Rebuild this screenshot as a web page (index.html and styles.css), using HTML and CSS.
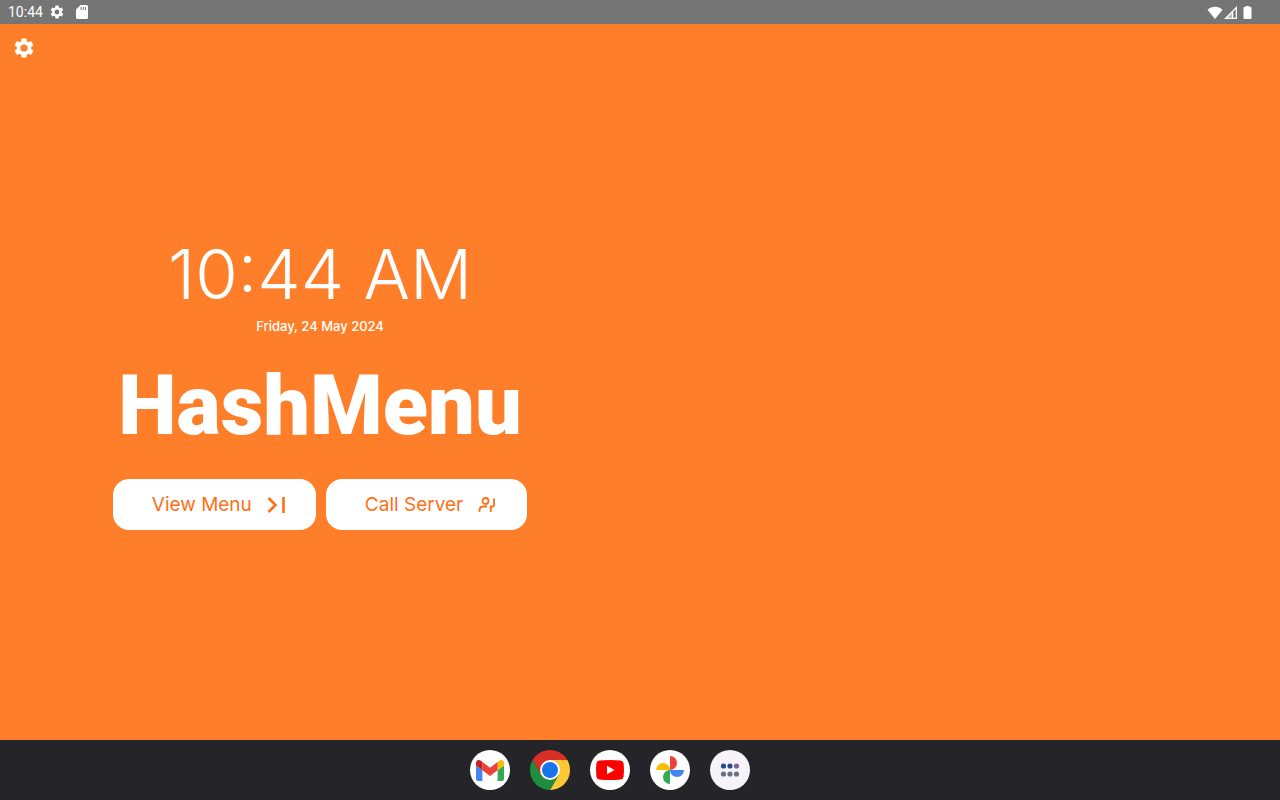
FILE: index.html
```html
<!DOCTYPE html>
<html lang="en">
<head>
    <meta charset="utf-8">
    <meta name="viewport" content="width=device-width, initial-scale=1">
    <title>HashMenu</title>
    <link rel="stylesheet" href="styles.css">
</head>
<body>
    <div class="status-bar">
        <div class="status-left">
            <span>10:44</span>
            <svg class="status-gear" viewBox="0 0 24 24" fill="currentColor"><path d="M19.14 12.94c.04-.3.06-.61.06-.94 0-.32-.02-.64-.07-.94l2.03-1.58a.49.49 0 0 0 .12-.61l-1.92-3.32a.49.49 0 0 0-.59-.22l-2.39.96c-.5-.38-1.03-.7-1.62-.94l-.36-2.54a.48.48 0 0 0-.48-.41h-3.84a.47.47 0 0 0-.47.41l-.36 2.54c-.59.24-1.13.57-1.62.94l-2.39-.96a.48.48 0 0 0-.59.22L2.74 8.87a.47.47 0 0 0 .12.61l2.03 1.58c-.05.3-.09.63-.09.94s.02.64.07.94l-2.03 1.58a.49.49 0 0 0-.12.61l1.92 3.32c.12.22.37.29.59.22l2.39-.96c.5.38 1.03.7 1.62.94l.36 2.54c.05.24.24.41.48.41h3.84c.24 0 .44-.17.47-.41l.36-2.54c.59-.24 1.13-.56 1.62-.94l2.39.96c.22.08.47 0 .59-.22l1.92-3.32a.47.47 0 0 0-.12-.61zM12 15.6A3.6 3.6 0 1 1 12 8.400a3.600 3.600 0 0 1 0 7.200z"/></svg>
            <svg class="status-card" viewBox="0 0 12 14"><path fill="#fff" d="M4.500 0H10.500A1.500 1.500 0 0 1 12 1.500V12.500A1.500 1.500 0 0 1 10.500 14H1.500A1.500 1.500 0 0 1 0 12.500V4.500z"/><path fill="#757575" d="M4.500 2h1v3h-1zM6.800 2h1v3h-1zM9 2h1v3H9z"/></svg>
        </div>
        <div class="status-right">
            <svg width="16" height="13" viewBox="0 0 16 13"><path fill="#fff" d="M8 13 .5 3.700C4.500-.2 11.500-.2 15.500 3.700z"/></svg>
            <svg width="13" height="13" viewBox="0 0 13 13"><path fill="#fff" fill-rule="evenodd" d="M13 0v13H0zM8 7.200 3.500 11.800H8zM9.300 5.500v6.300h2.400V3.200z"/><path fill="#fff" opacity=".5" d="M8 7.200 3.500 11.800H8z"/></svg>
            <svg class="battery" width="9" height="13" viewBox="0 0 9 13"><path fill="#fff" d="M2.500 1V0h4v1H7.500a1 1 0 0 1 1 1v10a1 1 0 0 1-1 1h-6a1 1 0 0 1-1-1V2a1 1 0 0 1 1-1z"/></svg>
        </div>
    </div>

    <main class="home">
        <button class="settings" type="button" aria-label="Settings">
            <svg width="24" height="24" viewBox="0 0 24 24" fill="currentColor"><path d="M19.14 12.94c.04-.3.06-.61.06-.94 0-.32-.02-.64-.07-.94l2.03-1.58a.49.49 0 0 0 .12-.61l-1.92-3.32a.49.49 0 0 0-.59-.22l-2.39.96c-.5-.38-1.03-.7-1.62-.94l-.36-2.54a.48.48 0 0 0-.48-.41h-3.84a.47.47 0 0 0-.47.41l-.36 2.54c-.59.24-1.13.57-1.62.94l-2.39-.96a.48.48 0 0 0-.59.22L2.74 8.87a.47.47 0 0 0 .12.61l2.03 1.58c-.05.3-.09.63-.09.94s.02.64.07.94l-2.03 1.58a.49.49 0 0 0-.12.61l1.92 3.32c.12.22.37.29.59.22l2.39-.96c.5.38 1.03.7 1.62.94l.36 2.54c.05.24.24.41.48.41h3.84c.24 0 .44-.17.47-.41l.36-2.54c.59-.24 1.13-.56 1.62-.94l2.39.96c.22.08.47 0 .59-.22l1.92-3.32a.47.47 0 0 0-.12-.61zM12 15.6A3.6 3.6 0 1 1 12 8.400a3.600 3.600 0 0 1 0 7.200z"/></svg>
        </button>
        <div class="welcome">
            <div class="clock">10:44 AM</div>
            <div class="date">Friday, 24 May 2024</div>
            <h1 class="title">HashMenu</h1>
            <div class="actions">
                <button class="action" type="button">
                    View Menu
                    <svg width="18" height="18" viewBox="0 0 18 18" fill="none" stroke="currentColor" stroke-width="2.600"><path d="M1.500 2 8.500 9l-7 7M16.500 1v16"/></svg>
                </button>
                <button class="action" type="button">
                    Call Server
                    <svg width="18" height="18" viewBox="0 0 18 18" fill="none" stroke="currentColor" stroke-width="1.800"><circle cx="7.500" cy="5" r="3"/><path d="M1.500 16v-1.500c0-2.500 1.500-4 4-4H9M16 2.500v6.300c0 1-.5 1.700-1.500 1.700h-1.800V16"/></svg>
                </button>
            </div>
        </div>
    </main>

    <nav class="dock">
        <a href="#" class="app" aria-label="Gmail">
            <svg width="28" height="21" viewBox="52 42 88 66"><path fill="#4285f4" d="M58 108h14V74L52 59v43c0 3.320 2.690 6 6 6"/><path fill="#34a853" d="M120 108h14c3.320 0 6-2.690 6-6V59l-20 15"/><path fill="#fbbc04" d="M120 48v26l20-15v-8c0-7.420-8.470-11.650-14.400-7.200"/><path fill="#ea4335" d="M72 74V48l24 18 24-18v26L96 92"/><path fill="#c5221f" d="M52 51v8l20 15V48l-5.600-4.200c-5.940-4.450-14.400-.22-14.400 7.200"/></svg>
        </a>
        <a href="#" class="app chrome" aria-label="Chrome">
            <svg width="40" height="40" viewBox="0 0 40 40"><path fill="#fcc934" d="M20 10H37.320A20 20 0 0 1 20 40L28.660 25z"/><path fill="#1e8e3e" d="M20 40A20 20 0 0 1 2.680 10L11.340 25 20 30 28.660 25z"/><path fill="#d93025" d="M2.680 10A20 20 0 0 1 37.320 10H20L11.340 25z"/><circle cx="20" cy="20" r="10" fill="#fff"/><circle cx="20" cy="20" r="8" fill="#1a73e8"/></svg>
        </a>
        <a href="#" class="app" aria-label="YouTube">
            <svg width="28" height="20" viewBox="0 0 28 20"><path fill="#f00" d="M3.500.5Q14-.5 24.500.5 27.300.8 27.600 3.500 28.300 10 27.600 16.500 27.300 19.200 24.500 19.500 14 20.500 3.500 19.500.7 19.200.4 16.500-.3 10 .4 3.500.7.800 3.500.5z"/><path fill="#fff" d="m11 5.800 7.500 4.200-7.500 4.200z"/></svg>
        </a>
        <a href="#" class="app" aria-label="Photos">
            <svg width="30" height="30" viewBox="0 0 30 30"><path fill="#ea4335" d="M15 1a7 7 0 0 1 0 14z"/><path fill="#4285f4" d="M29 15a7 7 0 0 1-14 0z"/><path fill="#34a853" d="M15 29a7 7 0 0 1 0-14z"/><path fill="#fbbc04" d="M1 15a7 7 0 0 1 14 0z"/></svg>
        </a>
        <a href="#" class="app all-apps" aria-label="All apps">
            <svg width="20" height="14" viewBox="0 0 20 14"><g fill="#294a8c"><circle cx="3.500" cy="3" r="2.600"/><circle cx="10" cy="3" r="2.600"/></g><circle cx="16.500" cy="3" r="2.600" fill="#7d648c"/><g fill="#697083"><circle cx="3.500" cy="11" r="2.600"/><circle cx="10" cy="11" r="2.600"/><circle cx="16.500" cy="11" r="2.600"/></g></svg>
        </a>
    </nav>
</body>
</html>
```
FILE: styles.css
```css
* {
    box-sizing: border-box;
}
body {
    margin: 0;
    min-height: 100vh;
    display: flex;
    flex-direction: column;
    font-family: Inter, "Open Sans", sans-serif;
    color: #fff;
    background-color: #ff7e29;
}
button {
    font-family: inherit;
    border: none;
    cursor: pointer;
}
svg {
    display: block;
}

/* system bar */
.status-bar {
    height: 24px;
    display: flex;
    justify-content: space-between;
    align-items: center;
    padding: 0 28px 0 8px;
    background-color: #757575;
    font-family: Roboto, sans-serif;
    font-size: 14px;
}
.status-left {
    display: flex;
    align-items: center;
}
.status-gear {
    width: 16px;
    height: 16px;
    margin: 0 11px 0 6px;
}
.status-card {
    width: 12px;
    height: 14px;
}
.status-right {
    display: flex;
    align-items: center;
    gap: 1px;
}
.battery {
    margin-left: 5px;
}

/* home screen */
.home {
    flex: 1;
    position: relative;
    display: grid;
    grid-template-columns: 1fr 1fr;
    align-items: center;
}
.settings {
    position: absolute;
    top: 12px;
    left: 12px;
    padding: 0;
    color: #fff;
    background: none;
}
.welcome {
    display: flex;
    flex-direction: column;
    align-items: center;
}
.clock {
    font-size: 69px;
    font-weight: 300;
    line-height: 80px;
    white-space: nowrap;
}
.date {
    font-size: 13px;
    font-weight: 500;
    line-height: 24px;
}
.title {
    margin: 18px 0 23px;
    font-family: Roboto, sans-serif;
    font-size: 83px;
    font-weight: 900;
    line-height: 100px;
}
.actions {
    display: flex;
    gap: 10px;
}
.action {
    display: flex;
    align-items: center;
    gap: 15px;
    height: 51px;
    padding: 0 31px 0 39px;
    border-radius: 16px;
    background-color: #fff;
    color: #ff6f14;
    font-size: 19px;
    white-space: nowrap;
}

/* dock */
.dock {
    height: 60px;
    display: flex;
    justify-content: center;
    align-items: center;
    gap: 20px;
    padding-right: 60px;
    background-color: #252428;
}
.app {
    width: 40px;
    height: 40px;
    display: flex;
    justify-content: center;
    align-items: center;
    border-radius: 50%;
    background-color: #fff;
}
.chrome {
    background: none;
}
.all-apps {
    background-color: #f7f3fb;
}
```
